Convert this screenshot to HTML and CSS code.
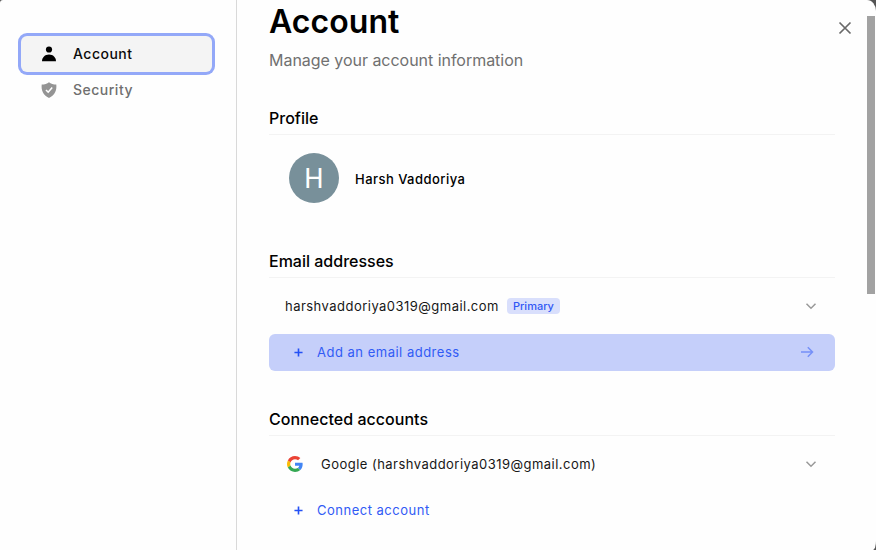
FILE: index.html
```html
<!DOCTYPE html>
<html lang="en">
<head>
<meta charset="utf-8">
<title>Account</title>
<link rel="stylesheet" href="styles.css">
</head>
<body>
<div class="modal">
  <nav class="sidebar">
    <a class="nav-item active">
      <svg class="nav-icon" viewBox="0 0 16 16"><circle cx="8" cy="3.5" r="3.1"/><path d="M1 15.2C1 11.5 4 8.6 8 8.6s7 2.9 7 6.6Z"/></svg>
      <span>Account</span>
    </a>
    <a class="nav-item">
      <svg class="nav-icon" viewBox="0 0 16 16"><path d="M8 .2C6.200 1.700 3.500 2.400.7 2.600.1 8.500 2 13.200 8 15.900c6-2.700 7.900-7.400 7.300-13.300C12.500 2.400 9.800 1.700 8 .2Z"/><path class="check" d="m5 8 2.200 2.200L11.200 5.600"/></svg>
      <span>Security</span>
    </a>
  </nav>
  <main class="content">
    <h1>Account</h1>
    <p class="subtitle">Manage your account information</p>
    <section class="profile-section">
      <h2>Profile</h2>
      <div class="profile"><span class="avatar">H</span><span class="name">Harsh Vaddoriya</span></div>
    </section>
    <section class="email-section">
      <h2>Email addresses</h2>
      <div class="row">
        <span class="email">harshvaddoriya0319@gmail.com</span><span class="badge">Primary</span>
        <svg class="chevron" viewBox="0 0 12 12"><path d="m1.500 3.800 4.500 4.400 4.500-4.400"/></svg>
      </div>
      <a class="action highlighted">
        <svg class="plus" viewBox="0 0 10 10"><path d="M5 .5v9M.5 5h9"/></svg>
        <span class="add-label">Add an email address</span>
        <svg class="arrow" viewBox="0 0 14 12"><path d="M1 6h11.500M7.800 1.300 12.500 6 7.800 10.700"/></svg>
      </a>
    </section>
    <section class="connected-section">
      <h2 class="connected-title">Connected accounts</h2>
      <div class="row">
        <svg class="google" viewBox="0 0 48 48"><path fill="#ea4335" d="M24 9.500c3.540 0 6.710 1.220 9.210 3.600l6.850-6.850C35.900 2.380 30.470 0 24 0 14.620 0 6.510 5.380 2.560 13.220l7.980 6.190C12.430 13.720 17.740 9.500 24 9.500z"/><path fill="#4285f4" d="M46.980 24.550c0-1.570-.15-3.090-.38-4.550H24v9.020h12.940c-.58 2.960-2.260 5.480-4.780 7.180l7.730 6c4.510-4.180 7.090-10.360 7.090-17.650z"/><path fill="#fbbc05" d="M10.530 28.590A14.500 14.500 0 0 1 9.770 24c0-1.600.27-3.140.76-4.590l-7.980-6.190A24 24 0 0 0 0 24c0 3.880.92 7.540 2.560 10.780l7.970-6.190z"/><path fill="#34a853" d="M24 48c6.480 0 11.930-2.130 15.890-5.810l-7.730-6c-2.150 1.450-4.920 2.300-8.160 2.300-6.260 0-11.570-4.220-13.470-9.910l-7.980 6.190C6.510 42.620 14.620 48 24 48z"/></svg>
        <span class="provider">Google (harshvaddoriya0319@gmail.com)</span>
        <svg class="chevron" viewBox="0 0 12 12"><path d="m1.500 3.800 4.500 4.400 4.500-4.400"/></svg>
      </div>
      <a class="action">
        <svg class="plus" viewBox="0 0 10 10"><path d="M5 .5v9M.5 5h9"/></svg>
        <span class="connect-label">Connect account</span>
      </a>
    </section>
  </main>
  <svg class="close" viewBox="0 0 14 14"><path d="m1.500 1.500 11 11M12.500 1.500l-11 11"/></svg>
  <div class="scrollbar"></div>
</div>
</body>
</html>
```
FILE: styles.css
```css
* { box-sizing: border-box; }
body { margin: 0; background: #555; font-family: Inter, sans-serif; color: #000; overflow: hidden; }
svg { display: block; flex: none; }
h1, h2, p { margin: 0; }
span { white-space: nowrap; }
.modal { position: relative; display: flex; height: 550px; background: #fefefe; overflow: hidden; border-radius: 3px 9px 3px 0 / 3px 11px 9px 0; }
.sidebar { width: 237px; padding: 36px 24px 0 21px; border-right: 1px solid #d9d9d9; flex: none; }
.nav-item { display: flex; align-items: center; height: 36px; width: 191px; padding-left: 20px; gap: 16px; border-radius: 6px; font-size: 14px; font-weight: 500; letter-spacing: .5px; color: #6f6f6f; }
.nav-item span { padding-bottom: 1px; }
.nav-item.active { background: #f4f4f4; box-shadow: 0 0 0 3px #93a8f8; color: #0a0a0a; }
.nav-icon { width: 16px; height: 16px; fill: #949494; }
.active .nav-icon { fill: #000; }
.nav-icon .check { fill: none; stroke: #fff; stroke-width: 1.6; }
.content { width: 598px; padding: 2px 0 0 32px; }
h1 { font-size: 32px; line-height: 40px; font-weight: 600; letter-spacing: .05px; }
.subtitle { margin-top: 6px; font-size: 16px; line-height: 24px; letter-spacing: -.03px; color: #707070; }
section { display: flex; flex-direction: column; }
h2 { height: 31px; border-bottom: 1px solid #f3f3f3; font-size: 16px; line-height: 28px; font-weight: 500; }
.profile-section { margin-top: 32px; }
.profile { display: flex; align-items: center; padding: 18px 20px 0; gap: 16px; }
.avatar { width: 50px; height: 50px; padding-top: 1px; border-radius: 50%; background: #78909a; color: #fff; display: flex; align-items: center; justify-content: center; font: 27px Roboto, sans-serif; }
.name { padding-top: 1px; font-size: 13px; font-weight: 500; letter-spacing: .46px; }
.email-section { margin-top: 44px; }
.row { display: flex; align-items: center; height: 56px; padding: 0 18px 0 16px; font-size: 13px; letter-spacing: .47px; color: #171717; }
.badge { margin-left: 8px; width: 53px; height: 16px; border-radius: 4px; background: #d9dffc; color: #3158f5; font-size: 11px; line-height: 16px; font-weight: 500; letter-spacing: 0; text-align: center; }
.chevron { width: 12px; height: 12px; margin-left: auto; fill: none; stroke: #999; stroke-width: 1.5; }
.action { display: flex; align-items: center; height: 37px; padding: 0 21px 1px 25px; border-radius: 6px; color: #315bf5; font-size: 13px; letter-spacing: .5px; }
.highlighted { background: #c5cffa; }
.plus { width: 9px; height: 9px; margin-right: 14px; fill: none; stroke: #2451f5; stroke-width: 1.8; }
.arrow { width: 14px; height: 12px; margin-left: auto; fill: none; stroke: #7590f8; stroke-width: 1.5; }
.connected-section { margin-top: 34px; }
.connected-title { letter-spacing: .03px; }
.google { width: 16px; height: 16px; margin: 0 18px 0 2px; }
.close { position: absolute; left: 838px; top: 21px; width: 14px; height: 14px; fill: none; stroke: #696969; stroke-width: 1.7; }
.scrollbar { position: absolute; left: 867px; top: 16px; width: 8px; height: 278px; background: #a2a2a2; }
```
